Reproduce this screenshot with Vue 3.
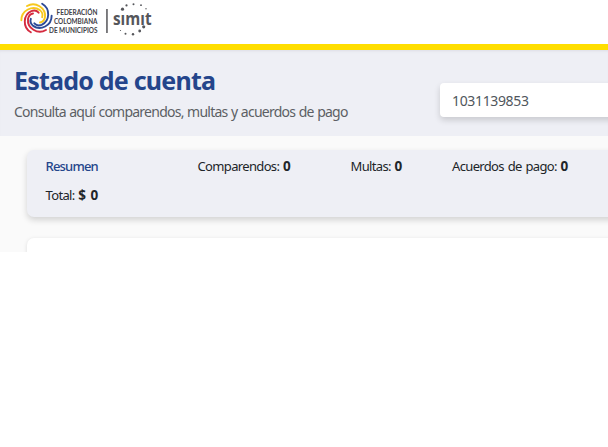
<script setup>
const counts = [
  { label: 'Comparendos:', value: '0', key: 'comparendos' },
  { label: 'Multas:', value: '0', key: 'multas' },
  { label: 'Acuerdos de pago:', value: '0', key: 'acuerdos' },
]
const dots = [
  [122.5, 9.2, 1.6], [126.5, 5.4, 1.1], [133.5, 4.2, 1], [141, 5.2, 0.9], [146, 8.7, 0.7],
  [143.7, 26.8, 1.6], [139.7, 31, 1.4], [133, 34.3, 1.2], [125.5, 33.8, 1], [120.5, 30.5, 0.6],
]
const arms = [
  { color: '#f7c81e', angle: 0 },
  { color: '#f7c81e', angle: 300 },
  { color: '#2c4a96', angle: 120 },
  { color: '#2c4a96', angle: 60 },
  { color: '#d52b3f', angle: 240 },
  { color: '#d52b3f', angle: 180 },
]
</script>

<template>
  <div class="page">
    <header class="topbar">
      <svg class="logo" width="160" height="44" viewBox="0 0 160 44">
        <g transform="translate(36.5 18)" fill="none" stroke-width="1.9" stroke-linecap="round">
          <path
            v-for="arm in arms"
            :key="arm.angle"
            :stroke="arm.color"
            :transform="`rotate(${arm.angle})`"
            d="M-9.5 -12C-1 -17 9.5 -10 8.5 -1C8 2 6 4 3.5 4.5"
          />
        </g>
        <g class="federation" font-size="7">
          <text x="56.5" y="15.4" textLength="41" lengthAdjust="spacingAndGlyphs">FEDERACIÓN</text>
          <text x="54" y="24.2" textLength="43.5" lengthAdjust="spacingAndGlyphs">COLOMBIANA</text>
          <text x="49" y="33" textLength="48.5" lengthAdjust="spacingAndGlyphs">DE MUNICIPIOS</text>
        </g>
        <rect x="106.2" y="9" width="1.5" height="24" fill="#555559" />
        <text class="simit" x="113" y="25" textLength="38.5" lengthAdjust="spacingAndGlyphs">sımıt</text>
        <circle v-for="(d, i) in dots" :key="i" :cx="d[0]" :cy="d[1]" :r="d[2]" fill="#55565b" />
      </svg>
    </header>
    <section class="hero">
      <div class="heading">
        <h1>Estado de cuenta</h1>
        <p>Consulta aquí comparendos, multas y acuerdos de pago</p>
      </div>
      <div class="search">1031139853</div>
    </section>
    <main class="content">
      <section class="summary">
        <div class="row">
          <span class="title">Resumen</span>
          <span v-for="c in counts" :key="c.key" :class="['count', c.key]">{{ c.label }} <b>{{ c.value }}</b></span>
        </div>
        <div class="total">Total: <b>$ 0</b></div>
      </section>
      <section class="panel"></section>
    </main>
  </div>
</template>

<style>
body {
  background: #fff;
}
</style>

<style scoped>
.page {
  width: 608px;
  height: 447px;
  overflow: hidden;
  background: #fff;
  font-family: "Noto Sans", "Open Sans", sans-serif;
  color: #212529;
}
.topbar {
  box-sizing: border-box;
  height: 50px;
  border-bottom: 6px solid #ffde00;
}
.logo {
  display: block;
}
.federation {
  font-family: Lato, sans-serif;
  font-weight: 700;
  fill: #424247;
}
.simit {
  font-family: "Open Sans", sans-serif;
  font-size: 18px;
  font-weight: 700;
  fill: #55565b;
}
.hero {
  display: flex;
  box-sizing: border-box;
  height: 86px;
  padding-left: 14px;
  background: #eeeff5;
  box-shadow: inset 0 3px 3px -2px #dcdde5;
}
.heading {
  width: 426px;
  flex: none;
}
h1 {
  margin: 12px 0 0;
  font-size: 25px;
  line-height: 36px;
  font-weight: 700;
  letter-spacing: -0.78px;
  color: #24458b;
}
p {
  margin: 4px 0 0;
  font-size: 14px;
  line-height: 20px;
  letter-spacing: -0.76px;
  word-spacing: 0.6px;
  color: #5c5f64;
}
.search {
  box-sizing: border-box;
  flex: none;
  width: 200px;
  height: 34px;
  margin-top: 33px;
  padding-left: 12px;
  border-radius: 4px;
  background: #fff;
  box-shadow: 0 3px 6px rgba(0, 0, 0, 0.16);
  font-size: 14px;
  line-height: 36px;
  letter-spacing: -0.35px;
  color: #50565c;
}
.content {
  box-sizing: border-box;
  height: 116px;
  padding: 14px 0 0 27px;
  overflow: hidden;
  background: #fafafa;
}
.summary {
  box-sizing: border-box;
  width: 620px;
  height: 67px;
  padding: 6px 0 0 18.5px;
  border-radius: 7px;
  background: #eeeff5;
  box-shadow: 0 3px 6px rgba(0, 0, 0, 0.16);
  font-size: 13px;
  line-height: 20px;
  letter-spacing: -0.65px;
  word-spacing: 1px;
  white-space: nowrap;
}
.summary b {
  font-size: 13.5px;
  line-height: 1;
  letter-spacing: 0;
}
.row {
  display: grid;
  grid-template-columns: 152px 153px 101.5px 160px;
}
.title {
  font-weight: 500;
  letter-spacing: -0.8px;
  color: #24458b;
}
.total {
  margin-top: 9px;
}
.panel {
  width: 620px;
  height: 40px;
  margin-top: 21px;
  border-radius: 7px;
  background: #fff;
  box-shadow: 0 1px 4px rgba(0, 0, 0, 0.12);
}
</style>
